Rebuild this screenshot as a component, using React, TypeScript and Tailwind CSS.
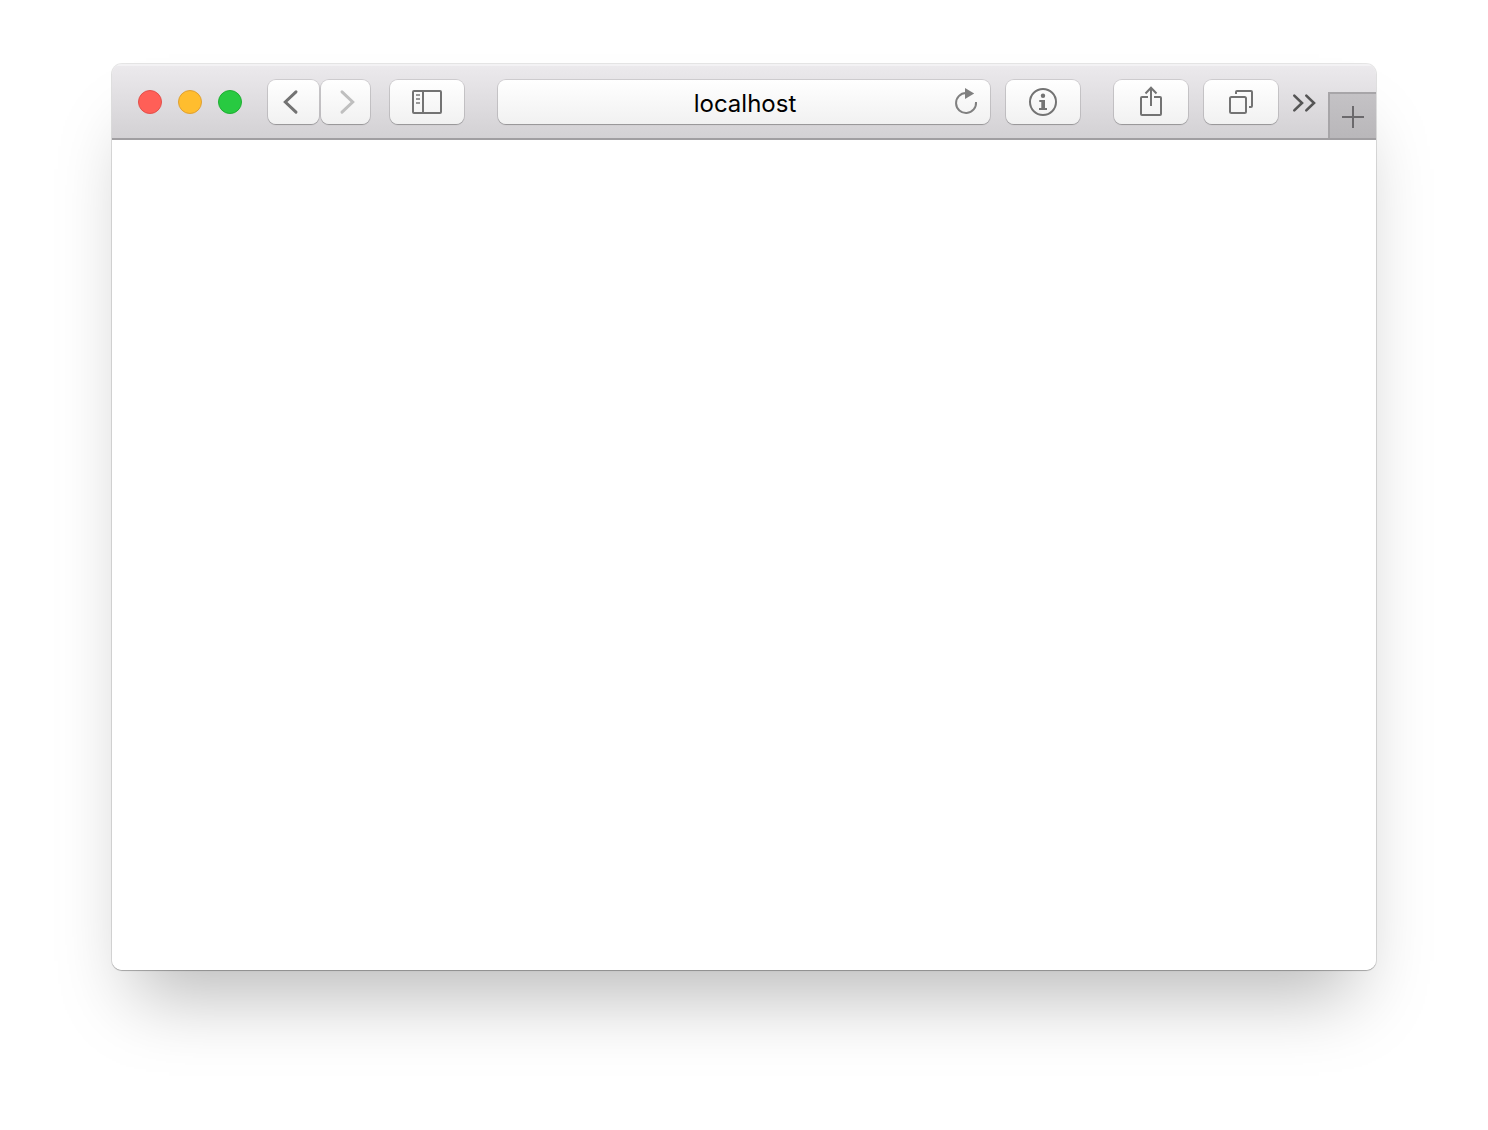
import type { ReactNode } from "react";

function ToolButton({ className, children }: { className: string; children: ReactNode }) {
  return (
    <button
      className={`flex h-11 shrink-0 items-center justify-center rounded-[8px] bg-gradient-to-b from-white to-[#f1f1f1] text-[#737373] shadow-[0_0_0_1px_rgba(0,0,0,0.11),0_1px_1px_0px_rgba(0,0,0,0.22)] ${className}`}
    >
      {children}
    </button>
  );
}

const icon = { width: 44, height: 44, viewBox: "0 0 44 44", fill: "none", stroke: "currentColor", strokeWidth: 2 };

export default function App() {
  return (
    <div className="h-[1130px] w-[1488px] overflow-hidden bg-white px-28 pt-16">
      <div className="flex h-[906px] w-[1264px] flex-col overflow-hidden rounded-[10px] bg-white shadow-[0_0_0_1px_rgba(0,0,0,0.1),0_1px_1px_0_rgba(0,0,0,0.22),0_48px_70px_-22px_rgba(0,0,0,0.27)]">
        <header className="flex h-[76px] shrink-0 items-start border-b-2 border-[#a09ea1] bg-gradient-to-b from-[#eceaed] to-[#d3d1d4] pt-4 shadow-[inset_0_2px_0_#f3f2f4]">
          <div className="ml-[26px] mt-[10px] flex gap-4">
            <span className="size-6 rounded-full border border-[#e2504b] bg-[#ff5f57]" />
            <span className="size-6 rounded-full border border-[#dfa032] bg-[#ffbd2e]" />
            <span className="size-6 rounded-full border border-[#1fae32] bg-[#28ca41]" />
          </div>
          <ToolButton className="ml-[26px] w-[51px]">
            <svg {...icon} strokeWidth={3} className="-ml-[9px]">
              <path d="M29 11.8 18.3 22 29 32.2" strokeLinecap="round" />
            </svg>
          </ToolButton>
          <ToolButton className="ml-[2px] w-[49px]">
            <svg {...icon} strokeWidth={3} className="text-[#bfbfbf]">
              <path d="M18 11.8 28.7 22 18 32.2" strokeLinecap="round" />
            </svg>
          </ToolButton>
          <ToolButton className="ml-5 w-[74px]">
            <svg {...icon}>
              <rect x="8" y="11" width="28" height="22" rx="1" />
              <path d="M18 11v22" />
              <path d="M11 15h4M11 19h4M11 23h4" stroke="#999" />
            </svg>
          </ToolButton>
          <div className="ml-[34px] flex h-11 w-[492px] items-center rounded-[8px] bg-gradient-to-b from-white to-[#f1f1f1] text-[#808080] shadow-[0_0_0_1px_rgba(0,0,0,0.11),0_1px_1px_0px_rgba(0,0,0,0.22)]">
            <div className="ml-[49px] mt-[3px] flex-1 text-center font-['Inter',sans-serif] text-[24px] leading-[30px] text-black">localhost</div>
            <svg {...icon} className="mr-[3px] shrink-0">
              <path d="M23 13A10 10 0 1 0 33 22" />
              <path d="M22 8 31.2 13.5 22 19Z" fill="currentColor" stroke="none" />
            </svg>
          </div>
          <ToolButton className="ml-4 w-[74px]">
            <svg {...icon}>
              <circle cx="22" cy="22" r="13" />
              <circle cx="22" cy="15.7" r="2.2" fill="currentColor" stroke="none" />
              <path d="M18.3 20h5.7v8h2v2h-8v-2h2.3v-6h-2z" fill="currentColor" stroke="none" />
            </svg>
          </ToolButton>
          <ToolButton className="ml-[34px] w-[74px]">
            <svg {...icon}>
              <path d="M19 17h-6q-1 0-1 1v16q0 1 1 1h18q1 0 1-1v-16q0-1-1-1h-6" />
              <path d="M22 26V8M16.5 13.5 22 7.8 27.5 13.5" />
            </svg>
          </ToolButton>
          <ToolButton className="ml-4 w-[74px]">
            <svg {...icon}>
              <rect x="11" y="17" width="16" height="16" rx="1.5" />
              <path d="M17 14v-2q0-1 1-1h14q1 0 1 1v14q0 1-1 1h-2" />
            </svg>
          </ToolButton>
          <svg width="26" height="22" viewBox="0 0 26 22" fill="none" stroke="#555" strokeWidth="2.6" className="ml-[13px] mt-3 shrink-0">
            <path d="M3.3 3.6 11 11 3.3 18.4M15.3 3.6 23 11 15.3 18.4" strokeLinecap="round" />
          </svg>
          <button className="ml-auto mt-3 flex h-[46px] w-12 shrink-0 items-center justify-center border-l-2 border-t-2 border-[#a7a5a8] bg-gradient-to-b from-[#c4c2c5] to-[#b9b7ba]">
            <svg width="22" height="22" viewBox="0 0 22 22" stroke="#6b696c" strokeWidth="2" className="mt-[2px]">
              <path d="M11 0v22M0 11h22" />
            </svg>
          </button>
        </header>
        <main className="flex-1 bg-white" />
      </div>
    </div>
  );
}
